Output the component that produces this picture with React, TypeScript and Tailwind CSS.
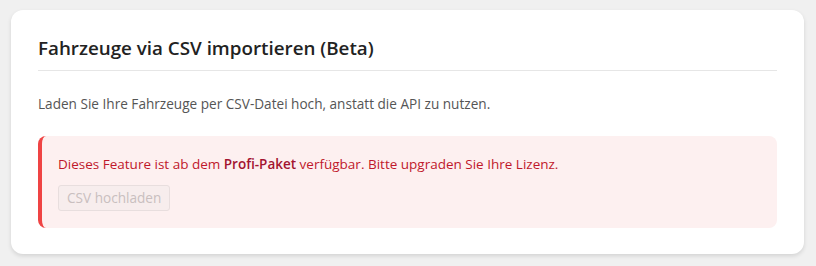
import React from "react";

function App() {
  return (
    <main className="min-h-[266px] w-[816px] bg-[#f0f0f0] pt-[10px] pl-[11px] pr-[12px] font-['Open_Sans',sans-serif]">
      <section className="rounded-xl bg-white px-[27px] pt-[24px] pb-[26px] shadow-[0_2px_4px_rgba(0,0,0,0.12)]">
        <h2 className="border-b border-[#e6e6e6] pb-[8px] text-[18.8px] font-semibold leading-[28px] text-[#222]">
          Fahrzeuge via CSV importieren (Beta)
        </h2>
        <p className="mt-[23px] text-[13.6px] leading-[20px] text-[#555]">
          Laden Sie Ihre Fahrzeuge per CSV-Datei hoch, anstatt die API zu nutzen.
        </p>
        <div className="mt-[22px] rounded-lg border-l-4 border-[#ef4444] bg-[#fdf0f0] pl-[16px] pr-4 pt-[18px] pb-[17px]">
          <p className="text-[13.5px] leading-[20px] text-[#c0182b]">
            Dieses Feature ist ab dem <strong className="font-semibold text-[#a31430]">Profi-Paket</strong> verfügbar. Bitte upgraden Sie Ihre Lizenz.
          </p>
          <button
            disabled
            className="mt-[11px] rounded-[3px] border border-[#e8dede] bg-[#f7eded] px-[8px] py-[3px] text-[13.6px] leading-[18px] text-[#c9bfbf]"
          >
            CSV hochladen
          </button>
        </div>
      </section>
    </main>
  );
}

export default App;
